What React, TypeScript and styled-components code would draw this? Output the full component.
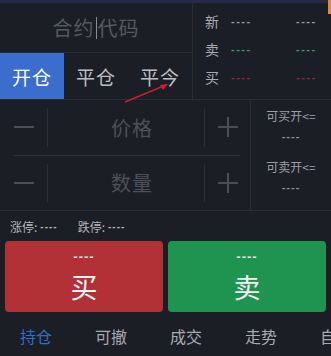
import React from "react";
import styled, { createGlobalStyle } from "styled-components";

const Global = createGlobalStyle`
  html, body { margin: 0; padding: 0; background: #1c1e26; }
  body { font-family: "Noto Sans CJK SC", "Noto Sans", "Liberation Sans", sans-serif; }
`;

const Screen = styled.div`
  position: relative;
  width: 331px;
  height: 356px;
  overflow: hidden;
  background: #1c1e26;
  display: flex;
  flex-direction: column;
`;

const TopStrip = styled.div`
  height: 3px;
  background: #282b47;
  flex: none;
`;

const Header = styled.div`
  display: flex;
  height: 96px;
  border-bottom: 1px solid #2a2d36;
  flex: none;
`;

const LeftCol = styled.div`
  width: 192px;
  border-right: 1px solid #2a2d36;
  display: flex;
  flex-direction: column;
`;

const CodeInput = styled.div`
  height: 49px;
  border-bottom: 1px solid #2a2d36;
  display: flex;
  align-items: center;
  justify-content: center;
  color: #555861;
  font-size: 20px;
  letter-spacing: 1px;
`;

const Caret = styled.span`
  display: inline-block;
  width: 1px;
  height: 22px;
  background: #8a8c92;
  margin: 0 1px;
  vertical-align: middle;
`;

const Tabs = styled.div`
  flex: 1;
  display: flex;
`;

const Tab = styled.div<{ $active?: boolean }>`
  width: 64px;
  display: flex;
  align-items: center;
  justify-content: center;
  font-size: 19px;
  letter-spacing: 1px;
  color: ${(p) => (p.$active ? "#ffffff" : "#bdbec2")};
  background: ${(p) => (p.$active ? "#3a6dcc" : "transparent")};
`;

const Quote = styled.div`
  flex: 1;
  display: flex;
  flex-direction: column;
  justify-content: center;
  gap: 9px;
  padding: 0 0 4px 12px;
`;

const QuoteRow = styled.div`
  display: flex;
  align-items: center;
  height: 19px;
`;

const QuoteLabel = styled.span`
  width: 26px;
  font-size: 14px;
  color: #a9aab0;
`;

const Dashes = styled.span<{ $color: string; $w?: number }>`
  width: ${(p) => p.$w ?? 65}px;
  font-family: "Liberation Sans", sans-serif;
  font-size: 11px;
  letter-spacing: 1.5px;
  font-weight: bold;
  color: ${(p) => p.$color};
`;

const Middle = styled.div`
  display: flex;
  height: 110px;
  border-bottom: 1px solid #2a2d36;
  flex: none;
`;

const Steppers = styled.div`
  width: 251px;
  border-right: 1px solid #2a2d36;
  display: flex;
  flex-direction: column;
  padding: 0 0 0 14px;
  box-sizing: border-box;
`;

const StepRow = styled.div<{ $top?: boolean }>`
  flex: 1;
  display: grid;
  grid-template-columns: 34px 1fr 36px;
  width: 226px;
  padding: 8px 0;
  box-sizing: border-box;
  border-bottom: ${(p) => (p.$top ? "1px solid #2e313a" : "none")};
`;

const StepBtn = styled.div<{ $side: "l" | "r" }>`
  display: flex;
  align-items: center;
  justify-content: ${(p) => (p.$side === "l" ? "flex-start" : "flex-end")};
  padding: ${(p) => (p.$side === "l" ? "0" : "0 2px 0 0")};
  border-${(p) => (p.$side === "l" ? "right" : "left")}: 1px solid #2c2f38;
`;

const StepValue = styled.div`
  display: flex;
  align-items: center;
  justify-content: center;
  font-size: 20px;
  letter-spacing: 1px;
  color: #4d5058;
  padding-left: 12px;
`;

const Avail = styled.div`
  flex: 1;
  display: flex;
  flex-direction: column;
  align-items: center;
  padding-top: 8px;
`;

const AvailLabel = styled.div`
  font-size: 12px;
  color: #9c9ea4;
  height: 16px;
  line-height: 16px;
  white-space: nowrap;
`;

const AvailDash = styled.div`
  font-family: "Liberation Sans", sans-serif;
  font-size: 11px;
  font-weight: bold;
  letter-spacing: 1px;
  color: #8f9197;
  margin: 6px 0 17px;
`;

const LimitRow = styled.div`
  height: 30px;
  display: flex;
  align-items: center;
  padding-left: 10px;
  gap: 20px;
  font-size: 12px;
  color: #b4b5ba;
  flex: none;
`;

const LimitItem = styled.span`
  display: inline-flex;
  align-items: center;
  gap: 3px;
`;

const SmallDash = styled.span`
  font-family: "Liberation Sans", sans-serif;
  font-size: 10px;
  letter-spacing: 1px;
  font-weight: bold;
  color: #b4b5ba;
`;

const Actions = styled.div`
  display: flex;
  gap: 5px;
  padding: 0 5px;
  height: 71px;
  flex: none;
`;

const Action = styled.div<{ $bg: string }>`
  flex: 1;
  border-radius: 4px;
  background: ${(p) => p.$bg};
  display: flex;
  flex-direction: column;
  align-items: center;
  justify-content: center;
  color: #f4f4f4;
`;

const ActionDash = styled.div`
  font-family: "Liberation Sans", sans-serif;
  font-size: 13px;
  font-weight: bold;
  letter-spacing: 1px;
  line-height: 14px;
  color: #e6e6e6;
`;

const ActionLabel = styled.div`
  font-size: 27px;
  line-height: 34px;
  margin-top: 6px;
`;

const BottomTabs = styled.div`
  flex: 1;
  display: flex;
  align-items: center;
  padding: 3px 0 0 20px;
  gap: 43px;
  white-space: nowrap;
`;

const BottomTab = styled.span<{ $active?: boolean }>`
  font-size: 16px;
  color: ${(p) => (p.$active ? "#2f6fc6" : "#a9aab0")};
`;

const Arrow = styled.svg`
  position: absolute;
  left: 120px;
  top: 80px;
  pointer-events: none;
`;

const Marker = styled.div`
  position: absolute;
  right: 0;
  top: 0;
  width: 3px;
  height: 14px;
  background: #e08b3c;
`;

const Minus = () => (
  <svg width="20" height="20" viewBox="0 0 20 20">
    <line x1="0" y1="10" x2="20" y2="10" stroke="#4b4e56" strokeWidth="2" />
  </svg>
);

const Plus = () => (
  <svg width="20" height="20" viewBox="0 0 20 20">
    <line x1="0" y1="10" x2="20" y2="10" stroke="#4b4e56" strokeWidth="2" />
    <line x1="10" y1="0" x2="10" y2="20" stroke="#4b4e56" strokeWidth="2" />
  </svg>
);

export default function App() {
  return (
    <Screen>
      <Global />
      <TopStrip />
      <Header>
        <LeftCol>
          <CodeInput>
            合约<Caret />代码
          </CodeInput>
          <Tabs>
            <Tab $active>开仓</Tab>
            <Tab>平仓</Tab>
            <Tab>平今</Tab>
          </Tabs>
        </LeftCol>
        <Quote>
          <QuoteRow>
            <QuoteLabel>新</QuoteLabel>
            <Dashes $color="#9a9ca2">----</Dashes>
            <Dashes $color="#9a9ca2">----</Dashes>
          </QuoteRow>
          <QuoteRow>
            <QuoteLabel>卖</QuoteLabel>
            <Dashes $color="#3f9a60">----</Dashes>
            <Dashes $color="#3f9a60">----</Dashes>
          </QuoteRow>
          <QuoteRow>
            <QuoteLabel>买</QuoteLabel>
            <Dashes $color="#8c2c3a">----</Dashes>
            <Dashes $color="#8c2c3a">----</Dashes>
          </QuoteRow>
        </Quote>
      </Header>
      <Middle>
        <Steppers>
          <StepRow $top>
            <StepBtn $side="l">
              <Minus />
            </StepBtn>
            <StepValue>价格</StepValue>
            <StepBtn $side="r">
              <Plus />
            </StepBtn>
          </StepRow>
          <StepRow>
            <StepBtn $side="l">
              <Minus />
            </StepBtn>
            <StepValue>数量</StepValue>
            <StepBtn $side="r">
              <Plus />
            </StepBtn>
          </StepRow>
        </Steppers>
        <Avail>
          <AvailLabel>可买开&lt;=</AvailLabel>
          <AvailDash>----</AvailDash>
          <AvailLabel>可卖开&lt;=</AvailLabel>
          <AvailDash>----</AvailDash>
        </Avail>
      </Middle>
      <LimitRow>
        <LimitItem>
          涨停:<SmallDash>----</SmallDash>
        </LimitItem>
        <LimitItem>
          跌停:<SmallDash>----</SmallDash>
        </LimitItem>
      </LimitRow>
      <Actions>
        <Action $bg="#b13137">
          <ActionDash>----</ActionDash>
          <ActionLabel>买</ActionLabel>
        </Action>
        <Action $bg="#1f9350">
          <ActionDash>----</ActionDash>
          <ActionLabel>卖</ActionLabel>
        </Action>
      </Actions>
      <BottomTabs>
        <BottomTab $active>持仓</BottomTab>
        <BottomTab>可撤</BottomTab>
        <BottomTab>成交</BottomTab>
        <BottomTab>走势</BottomTab>
        <BottomTab>自选</BottomTab>
      </BottomTabs>
      <Arrow width="52" height="26" viewBox="0 0 52 26">
        <line x1="5" y1="22" x2="46" y2="5" stroke="#c8202e" strokeWidth="1.4" />
        <polygon points="48,4 40,5 43,10" fill="#c8202e" />
      </Arrow>
      <Marker />
    </Screen>
  );
}
